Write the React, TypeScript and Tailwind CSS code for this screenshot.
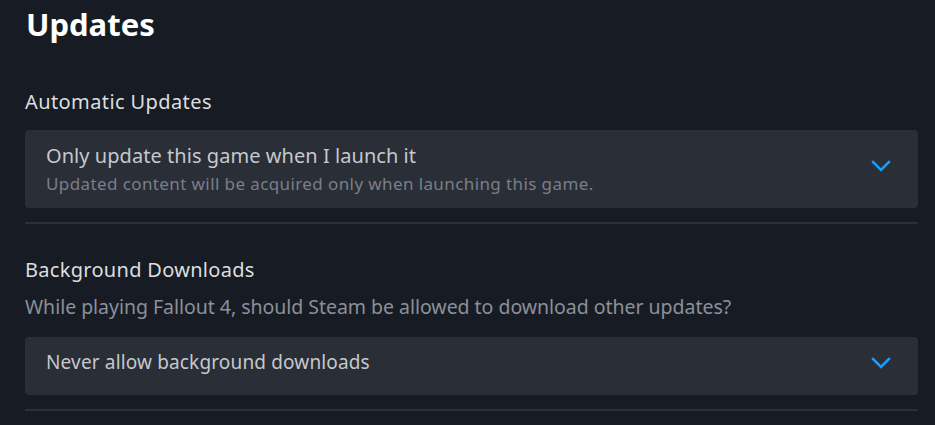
import React from "react";

function Chevron() {
  return (
    <svg width="20" height="12" viewBox="0 0 20 12" fill="none" className="block">
      <path d="M1.2 1.2 L10 10 L18.8 1.2" stroke="#1a9fff" strokeWidth="2.5" />
    </svg>
  );
}

export default function App() {
  return (
    <div
      className="w-[935px] h-[425px] overflow-hidden bg-[#171c24] pl-[25px] pr-[17px]"
      style={{ fontFamily: '"Noto Sans", "Open Sans", sans-serif' }}
    >
      <h1 className="text-[31px] font-bold text-white leading-none pt-[9px] pl-px">Updates</h1>
      <div className="mt-[52px] text-[20px] leading-none tracking-[0.4px] text-[#dcdedf]">Automatic Updates</div>
      <div className="mt-[18px] h-[78px] rounded-[4px] bg-[#2a2e37] flex items-start pl-[21px] pr-[27px]">
        <div className="flex-1 pt-[16px]">
          <div className="text-[20px] leading-none tracking-[0.05px] text-[#c5c8cd]">Only update this game when I launch it</div>
          <div className="mt-[9px] text-[17px] leading-none tracking-[0.4px] text-[#7a7f88]">
            Updated content will be acquired only when launching this game.
          </div>
        </div>
        <div className="mt-[30px]">
          <Chevron />
        </div>
      </div>
      <div className="mt-[14px] h-[2px] bg-[#2c3039]" />
      <div className="mt-[36px] text-[20px] leading-none tracking-[0.3px] text-[#dcdedf]">Background Downloads</div>
      <div className="mt-[17px] text-[19.5px] leading-none tracking-[-0.03px] text-[#8b9099]">
        While playing Fallout 4, should Steam be allowed to download other updates?
      </div>
      <div className="mt-[20px] h-[58px] rounded-[4px] bg-[#2a2e37] flex items-start pl-[21px] pr-[27px]">
        <div className="flex-1 pt-[16px] text-[19px] leading-none tracking-[0.15px] text-[#c5c8cd]">Never allow background downloads</div>
        <div className="mt-[20px]">
          <Chevron />
        </div>
      </div>
      <div className="mt-[14px] h-[2px] bg-[#2c3039]" />
    </div>
  );
}
